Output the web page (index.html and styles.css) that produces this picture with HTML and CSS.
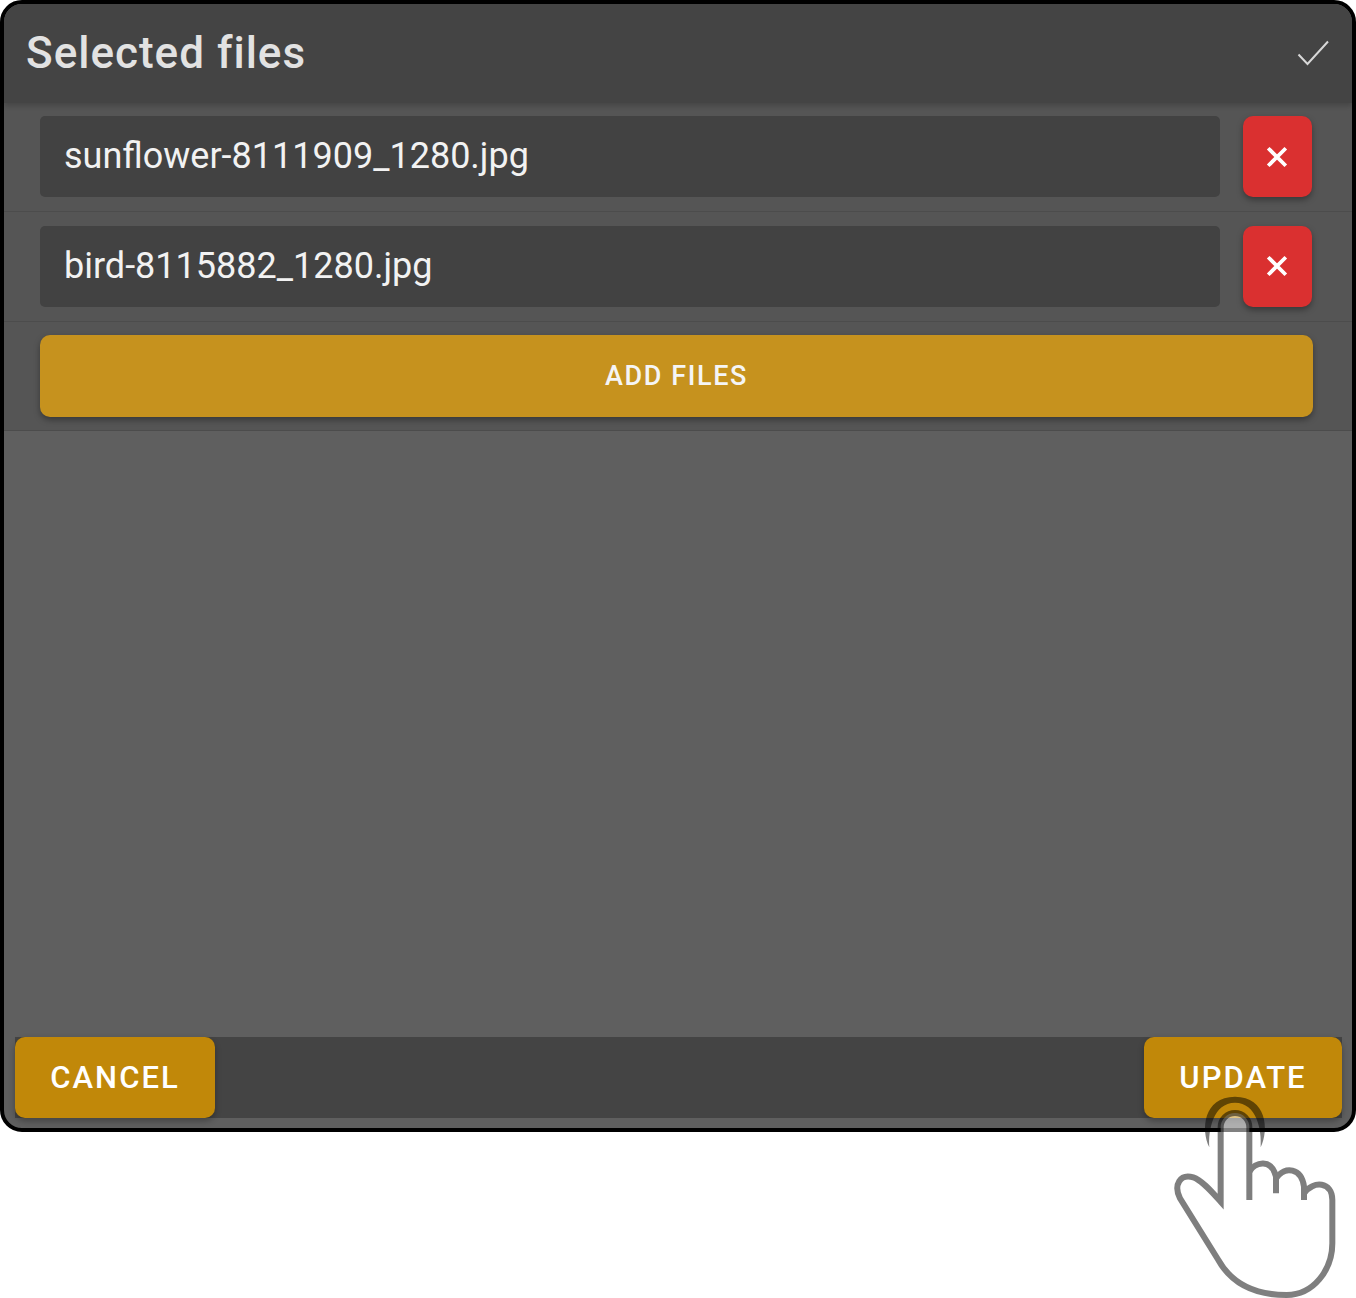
FILE: index.html
```html
<!DOCTYPE html>
<html lang="en">
<head>
<meta charset="utf-8">
<title>Selected files</title>
<link rel="stylesheet" href="styles.css">
</head>
<body>
<div class="dialog">
  <header class="head">
    <h1 class="title">Selected files</h1>
    <svg class="check" viewBox="0 0 32 26" width="32" height="26"><path d="M1.5 14.5 L10.5 24 L31 1.5" fill="none" stroke="#d8d8d8" stroke-width="2"/></svg>
  </header>
  <div class="row">
    <div class="file">sunflower-8111909_1280.jpg</div>
    <button class="del"><svg viewBox="0 0 20 20" width="22" height="22"><path d="M2 2 L18 18 M18 2 L2 18" stroke="#fff" stroke-width="3.4" fill="none"/></svg></button>
  </div>
  <div class="row">
    <div class="file">bird-8115882_1280.jpg</div>
    <button class="del"><svg viewBox="0 0 20 20" width="22" height="22"><path d="M2 2 L18 18 M18 2 L2 18" stroke="#fff" stroke-width="3.4" fill="none"/></svg></button>
  </div>
  <div class="row row-add">
    <button class="add">ADD FILES</button>
  </div>
  <div class="spacer"></div>
  <footer class="foot">
    <button class="act cancel">CANCEL</button>
    <button class="act update">UPDATE</button>
  </footer>
</div>
<svg class="hand" viewBox="0 0 678 804" width="226" height="268">
  <path class="hand-fill" d="M272 515 L272 292 A43 43 0 0 1 358 292 L358 425 C375 395 425 385 438 440 L438 445 C465 405 515 415 522 470 L522 490 C550 450 607 455 607 510 L607 640 C607 720 550 795 470 795 C390 795 310 770 265 690 L150 505 C130 465 150 430 190 442 C215 450 245 485 272 515 Z"/>
  <g class="hand-lines">
    <path d="M358 510 L358 292 A43 43 0 0 0 272 292 L272 515 C245 485 215 450 190 442 C150 430 130 465 150 505 L265 690 C310 770 390 795 470 795 C550 795 607 720 607 640 L607 510 C607 455 550 450 522 490"/>
    <path d="M522 510 L522 470 C515 415 465 405 438 445"/>
    <path d="M438 490 L438 440 C425 385 375 395 358 425"/>
  </g>
  <path class="ring" d="M238 352 C212 300 220 200 315 200 C410 200 418 300 392 352 C396 300 380 218 315 218 C250 218 234 300 238 352 Z"/>
</svg>
</body>
</html>
```
FILE: styles.css
```css
* { box-sizing: border-box; }
html, body { margin: 0; padding: 0; background: #fff; }
body { position: relative; width: 1356px; height: 1298px; overflow: hidden; font-family: Roboto, "Liberation Sans", sans-serif; }
.dialog {
  width: 1356px; height: 1132px;
  border: 4px solid #000; border-radius: 22px;
  background: #5f5f5f; overflow: hidden;
  display: flex; flex-direction: column;
}
.head {
  height: 98.5px; flex: none; background: #444;
  display: flex; align-items: center; justify-content: space-between;
  padding: 0 23px 0 22px;
  box-shadow: 0 3px 5px rgba(0,0,0,.18);
  position: relative; z-index: 1;
}
.title { margin: 0; font-size: 44px; line-height: 52px; font-weight: 500; color: #e2e2e2; letter-spacing: 1px; }
.row {
  height: 109.67px; flex: none; background: #555;
  display: flex; align-items: center; gap: 23px;
  padding: 0 40px 0 36px;
  border-bottom: 1.33px solid #4c4c4c;
}
.row-add { padding-right: 39px; }
.file {
  flex: 1; height: 81.33px; background: #424242; border-radius: 5px;
  color: #f2f2f2; font-size: 36px; line-height: 81.33px; padding-left: 24px;
}
.del {
  width: 69.5px; height: 81.33px; flex: none; border: 0; border-radius: 10px; padding: 0;
  background: #da3030; box-shadow: 0 3px 6px rgba(0,0,0,.35);
  display: flex; align-items: center; justify-content: center;
}
.add {
  width: 100%; height: 81.33px; border: 0; border-radius: 10px; background: #c6921e;
  color: #f5f5f5; font: 500 27px Roboto, sans-serif; letter-spacing: 1.6px;
  box-shadow: 0 3px 6px rgba(0,0,0,.35);
}
.spacer { flex: 1; }
.foot {
  height: 81.33px; flex: none; margin: 0 10px 10px 11px; background: #444;
  display: flex; justify-content: space-between;
}
.act {
  height: 81.33px; border: 0; border-radius: 10px; background: #c18809; padding: 0;
  color: #fff; font: 500 31px Roboto, sans-serif; letter-spacing: 2.05px;
  box-shadow: 0 3px 6px rgba(0,0,0,.3);
}
.cancel { width: 200px; }
.update { width: 198px; }
.hand { position: absolute; left: 1130px; top: 1030px; }
.hand-fill { fill: rgba(255,255,255,.5); }
.hand-lines { fill: none; stroke: #000; stroke-width: 18; stroke-linejoin: miter; opacity: .5; }
.ring { fill: rgba(0,0,0,.5); stroke: none; }
```
